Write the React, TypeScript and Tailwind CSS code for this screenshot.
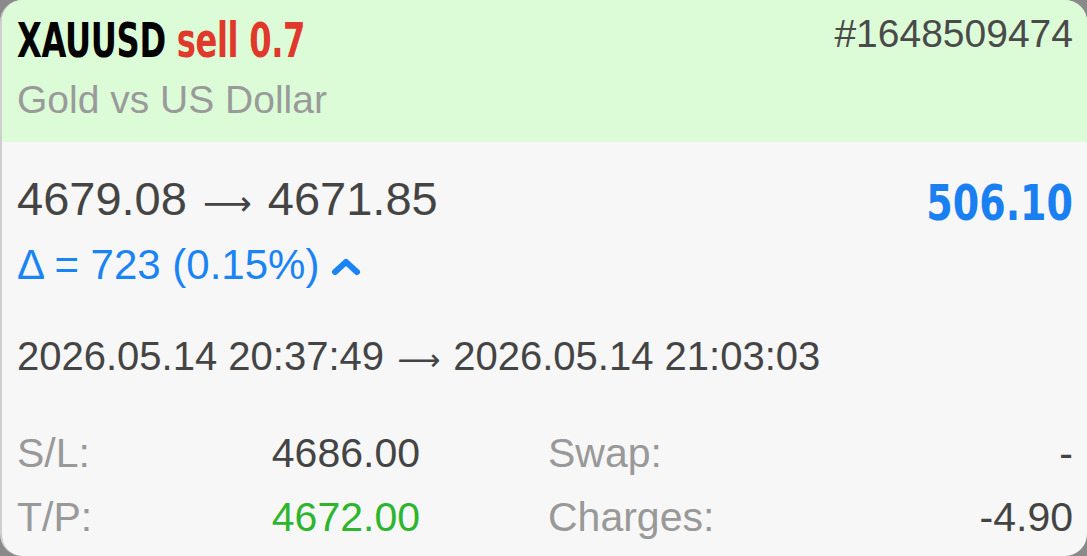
import React from "react";

const sans = { fontFamily: '"Liberation Sans", Arial, Helvetica, sans-serif' };
const narrow = {
  fontFamily: '"DejaVu Sans", "Roboto", sans-serif',
};
const arrow = { fontFamily: '"DejaVu Sans", sans-serif' };

export default function App() {
  return (
    <div className="w-[1087px] h-[556px] bg-[#8a8a8a] overflow-hidden" style={sans}>
      <div className="h-full w-full rounded-[22px] overflow-hidden bg-[#f7f7f7] border-l-2 border-[#cfcfcf]">
        <div className="h-[142px] bg-[#dcfcd8] pl-[15px] pr-[14px]">
          <div className="flex h-[80px] items-center justify-between">
            <div
              className="origin-left scale-x-[0.67] whitespace-nowrap text-[48px] font-bold leading-none tracking-[-0.5px]"
              style={narrow}
            >
              <span className="text-black">XAUUSD</span>{" "}
              <span className="text-[#e0392b]">sell 0.7</span>
            </div>
            <div className="self-start mt-[14px] text-[39px] leading-none text-[#4a4a4a]">#1648509474</div>
          </div>
          <div className="flex h-[38px] items-center text-[39px] leading-none text-[#9a9a9a]">
            Gold vs US Dollar
          </div>
        </div>

        <div className="pl-[15px] pr-[14px] pt-[24px]">
          <div className="flex h-[64px] items-center justify-between">
            <div className="text-[47px] leading-none text-[#444] whitespace-nowrap">
              4679.08 <span className="mx-[3px] text-[34px]" style={arrow}>⟶</span> 4671.85
            </div>
            <div
              className="mt-[10px] origin-right scale-x-[0.76] text-[50px] font-bold leading-none text-[#1a7ff0]"
              style={narrow}
            >
              506.10
            </div>
          </div>
          <div className="flex h-[70px] items-center gap-[12px] text-[42px] leading-none text-[#1a84f5]">
            <span>Δ = 723 (0.15%)</span>
            <svg width="30" height="20" viewBox="0 0 30 20" className="mt-[4px]">
              <polyline
                points="4,15 15,5 26,15"
                fill="none"
                stroke="#1a84f5"
                strokeWidth="6"
                strokeLinecap="round"
                strokeLinejoin="round"
              />
            </svg>
          </div>
          <div className="mt-[20px] flex h-[72px] items-center text-[40px] leading-none text-[#444]">
            <span className="whitespace-nowrap">
              2026.05.14 20:37:49 <span className="mx-[2px] text-[30px]" style={arrow}>⟶</span> 2026.05.14 21:03:03
            </span>
          </div>
          <div className="mt-[29px] grid grid-cols-[403px_1fr] gap-x-[128px] text-[41px] leading-none">
            <div className="flex h-[64px] items-center justify-between">
              <span className="text-[#999]">S/L:</span>
              <span className="text-[#444]">4686.00</span>
            </div>
            <div className="flex h-[64px] items-center justify-between">
              <span className="text-[#999]">Swap:</span>
              <span className="text-[#444]">-</span>
            </div>
            <div className="flex h-[64px] items-center justify-between">
              <span className="text-[#999]">T/P:</span>
              <span className="text-[#2db52d]">4672.00</span>
            </div>
            <div className="flex h-[64px] items-center justify-between">
              <span className="text-[#999]">Charges:</span>
              <span className="text-[#444]">-4.90</span>
            </div>
          </div>
        </div>
      </div>
    </div>
  );
}
